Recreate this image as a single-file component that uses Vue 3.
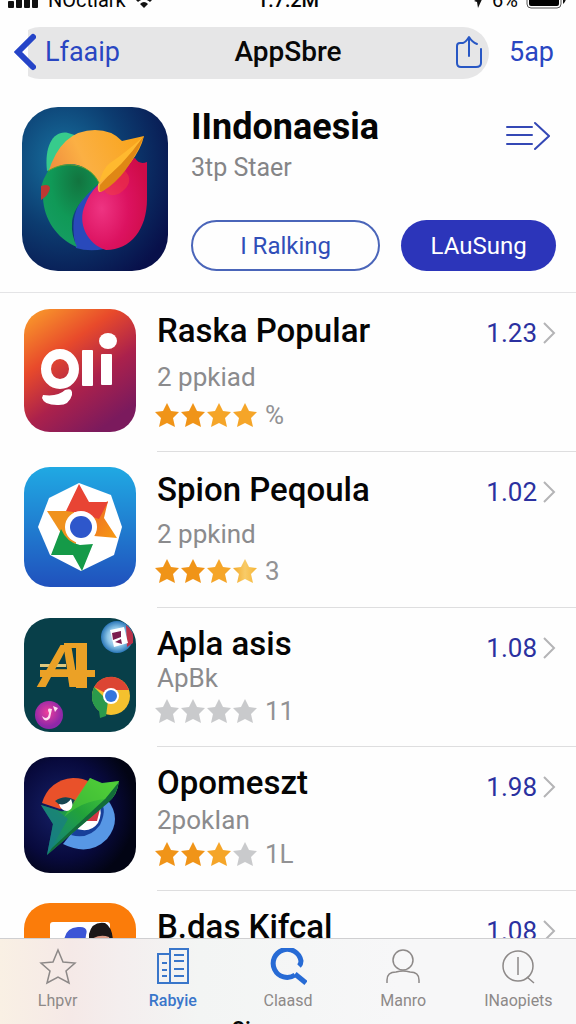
<script setup>
import { ref } from 'vue'

const apps = [
  { id: 'gii', title: 'Raska Popular', sub: '2 ppkiad', stars: 4, count: '%', score: '1.23', size: 'tall' },
  { id: 'spin', title: 'Spion Peqoula', sub: '2 ppkind', stars: 4, fade: true, count: '3', score: '1.02', size: 'mid' },
  { id: 'apla', title: 'Apla asis', sub: 'ApBk', stars: 0, count: '11', score: '1.08', size: 'short' },
  { id: 'odom', title: 'Opomeszt', sub: '2pokIan', stars: 3, count: '1L', score: '1.98', size: 'base' },
  { id: 'bdas', title: 'B.das Kifcal', sub: '2pokian', stars: 4, count: '2', score: '1.08', size: 'last' }
]

const tabs = [
  { id: 'star', label: 'Lhpvr' },
  { id: 'list', label: 'Rabyie' },
  { id: 'search', label: 'Claasd' },
  { id: 'user', label: 'Manro' },
  { id: 'inspect', label: 'INaopiets' }
]

const active = ref('list')

const starFill = (app, n) => {
  if (n > app.stars) return '#c9cacc'
  if (app.fade && n === 4) return 'url(#star-fade)'
  return n > 2 ? '#f5a528' : '#f09418'
}
</script>

<template>
  <div class="page">
    <div class="status">
      <div class="status-side">
        <svg width="32" height="20" viewBox="0 0 32 20" fill="#111">
          <rect x="0" y="11" width="6" height="7" rx="1" /><rect x="8" y="8" width="6" height="10" rx="1" />
          <rect x="16" y="5" width="6" height="13" rx="1" /><rect x="24" y="2" width="6" height="16" rx="1" />
        </svg>
        <span>NOctlark</span>
        <svg width="20" height="20" viewBox="0 0 20 20">
          <path d="M1 9Q10 1 19 9L16 12Q10 7 4 12Z" fill="#111" /><path d="M6 14Q10 10 14 14L10 18Z" fill="#111" />
        </svg>
      </div>
      <span class="clock">1:7:2M</span>
      <div class="status-side end">
        <svg width="10" height="20" viewBox="0 0 10 20"><path d="M10 5L4 18L3 12L0 11Z" fill="#111" /></svg>
        <span>6%</span>
        <svg width="42" height="20" viewBox="0 0 42 20">
          <rect x="1" y="2" width="34" height="16" rx="4" fill="none" stroke="#555" />
          <rect x="3" y="4" width="30" height="12" rx="2" fill="#000" /><path d="M37 7Q42 10 37 14Z" fill="#111" />
        </svg>
      </div>
    </div>

    <nav class="nav">
      <div class="nav-pill">
        <a class="back" href="#">
          <svg width="22" height="38" viewBox="0 0 22 38"><path d="M19 4L4 19L19 34" fill="none" stroke="#2544c8" stroke-width="6" stroke-linecap="round" stroke-linejoin="miter" /></svg>
          <span>Lfaaip</span>
        </a>
        <h1>AppSbre</h1>
        <button class="share" aria-label="Share">
          <svg width="26" height="34" viewBox="0 0 26 34" fill="none" stroke="#2857c4" stroke-width="2" stroke-linecap="round" stroke-linejoin="round">
            <path d="M7 8H4Q1 8 1 11V28Q1 32 5 32H20Q25 32 25 28V14M13 21V3M7 8Q10 7 13 2Q16 7 21 9" />
          </svg>
        </button>
      </div>
      <a class="nav-link" href="#">5ap</a>
    </nav>

    <header class="hero">
      <svg class="hero-icon" viewBox="0 0 146 164">
        <defs>
          <radialGradient id="sea" cx=".28" cy=".32" r=".85"><stop offset="0" stop-color="#17719f" /><stop offset=".5" stop-color="#0c3c70" /><stop offset="1" stop-color="#08104a" /></radialGradient>
          <linearGradient id="sun" x1="0" y1=".7" x2="1" y2=".4"><stop offset="0" stop-color="#ef8b3e" /><stop offset=".4" stop-color="#fbb044" /><stop offset="1" stop-color="#f9a51d" /></linearGradient>
          <radialGradient id="rose" cx=".3" cy=".55" r=".75"><stop offset="0" stop-color="#ee3482" /><stop offset=".55" stop-color="#dc1260" /><stop offset="1" stop-color="#cf0c48" /></radialGradient>
          <radialGradient id="leaf" cx=".65" cy=".2" r=".8"><stop offset="0" stop-color="#12743f" /><stop offset=".6" stop-color="#109957" /><stop offset="1" stop-color="#159d62" /></radialGradient>
        </defs>
        <rect width="146" height="164" fill="url(#sea)" />
        <path d="M25 64C22 38 32 23 46 26L56 29L38 58Z" fill="#37cb8c" />
        <path d="M77 77C54 92 47 111 54 141Q67 145 82 142L90 95Z" fill="#2949bb" />
        <path d="M113 51Q117 58 125 55V92C125 122 109 143 84 143C65 137 55 116 63 98Q67 87 76 78L100 55Z" fill="url(#rose)" />
        <path d="M102 63Q112 72 103 82Q93 92 84 86L81 82Z" fill="#f54139" opacity=".45" />
        <path d="M26 66Q39 23 73 23Q90 23 100 34L122 29Q119 42 109 55Q94 75 80 84Q75 88 76 77Q66 56 46 57Q34 58 26 66Z" fill="url(#sun)" />
        <path d="M122 29L78 78Q76 87 81 84Q106 69 122 29Z" fill="#df8715" />
        <path d="M121 30Q103 46 88 56Q81 61 77 76Q100 60 121 30Z" fill="#ffb92f" />
        <path d="M26 64C45 52 69 58 77 76C64 89 51 100 50 116Q49 127 55 140C34 131 22 112 21 91L19 80Q21 72 26 64Z" fill="url(#leaf)" />
        <path d="M26 64C45 52 69 58 77 76" fill="none" stroke="#67a22b" />
        <path d="M19 79Q27 76 28 81Q27 88 19 93Z" fill="#bd3833" />
      </svg>
      <div class="hero-body">
        <div class="hero-top">
          <div>
            <h2>IIndonaesia</h2>
            <p>3tp Staer</p>
          </div>
          <button class="menu" aria-label="Menu">
            <svg width="44" height="30" viewBox="0 0 44 30" fill="none" stroke="#3448b5" stroke-width="2" stroke-linecap="round"><path d="M1 6H26M1 14H26M1 23H26M29 2L43 15L29 28" /></svg>
          </button>
        </div>
        <div class="actions">
          <button class="btn outline">I Ralking</button>
          <button class="btn solid">LAuSung</button>
        </div>
      </div>
    </header>

    <main class="list">
      <svg class="defs" width="0" height="0">
        <linearGradient id="star-fade"><stop offset="0" stop-color="#f3a929" /><stop offset=".5" stop-color="#f8cb68" /><stop offset="1" stop-color="#f6b535" /></linearGradient>
      </svg>
      <a v-for="app in apps" :key="app.id" href="#" class="row" :class="app.size">
        <svg v-if="app.id === 'gii'" class="icon" viewBox="0 0 112 123">
          <defs><linearGradient id="dusk" x1="0" y1="0" x2=".65" y2="1"><stop offset="0" stop-color="#fba22b" /><stop offset=".38" stop-color="#e84a2b" /><stop offset=".68" stop-color="#ab214c" /><stop offset="1" stop-color="#7b1a5d" /></linearGradient></defs>
          <rect width="112" height="123" fill="url(#dusk)" />
          <ellipse cx="36" cy="60" rx="14" ry="15" fill="none" stroke="#fff" stroke-width="10" />
          <path d="M19 86Q34 88 41 81Q49 78 48 86Q45 97 33 96Q20 96 18 89Z" fill="#fff" />
          <rect x="58" y="41" width="11" height="36" rx="1" fill="#fff" />
          <rect x="77" y="45" width="11" height="31" rx="1" fill="#fff" />
          <ellipse cx="84" cy="32" rx="9" ry="8" fill="#fff" />
        </svg>
        <svg v-else-if="app.id === 'spin'" class="icon" viewBox="0 0 112 120">
          <defs>
            <linearGradient id="sky" x1="0" y1="0" x2="0" y2="1"><stop offset="0" stop-color="#20a9e3" /><stop offset="1" stop-color="#2051bd" /></linearGradient>
            <linearGradient id="amber" x1="0" y1="0" x2="1" y2="1"><stop offset="0" stop-color="#ec6728" /><stop offset="1" stop-color="#f79b12" /></linearGradient>
          </defs>
          <rect width="112" height="120" fill="url(#sky)" />
          <path d="M55 16L87 28L98 60L90 88L57 104L26 88L14 60L25 31Z" fill="#fff" />
          <path d="M66 44L84 34L80 51L93 71L70 69Z" fill="url(#amber)" />
          <path d="M23 44H50L52 77L42 74Z" fill="#f0921d" />
          <path d="M55 17L65 35H84L75 52L56 46L42 44Z" fill="#e84434" />
          <path d="M37 62L27 88H49L58 104L69 77L56 78Q43 76 37 62Z" fill="#159a48" />
          <circle cx="57" cy="60" r="16" fill="#fff" />
          <circle cx="57" cy="60" r="11" fill="#2e57cb" />
        </svg>
        <svg v-else-if="app.id === 'apla'" class="icon" viewBox="0 0 112 114">
          <defs>
            <radialGradient id="ball"><stop offset="0" stop-color="#f4f8fc" /><stop offset=".6" stop-color="#8ac4e7" /><stop offset="1" stop-color="#2b77b8" /></radialGradient>
            <radialGradient id="plum" cx=".45" cy=".4"><stop offset="0" stop-color="#ef3e9b" /><stop offset="1" stop-color="#8f28a9" /></radialGradient>
          </defs>
          <rect width="112" height="114" fill="#083f49" />
          <circle cx="93" cy="19" r="16" fill="url(#ball)" />
          <path d="M102 7Q111 13 109 25L103 29Z" fill="#ba3148" />
          <path d="M86 12L100 9L104 25L90 29Z" fill="#fff" /><path d="M88 15L97 13V19L89 22ZM91 24L97 21L98 26Z" fill="#7b1e4f" />
          <g fill="#eba126">
            <rect x="16" y="46" width="26" height="3" fill="#dfc87d" />
            <text x="14" y="69" class="logo-text">A</text>
            <rect x="52" y="25" width="11" height="45" /><rect x="16" y="52" width="55" height="7" />
            <rect x="40" y="25" width="22" height="5" />
          </g>
          <circle cx="87" cy="78" r="19" fill="#f4c12e" />
          <path d="M87 78L70 69A19 19 0 0 1 105 72L88 72Z" fill="#dc4533" />
          <path d="M70 69L84 83L82 98L76 100L75 93Q64 84 70 69Z" fill="#2b9a4b" />
          <circle cx="87" cy="78" r="8" fill="#fff" /><circle cx="87" cy="78" r="6" fill="#3476dd" />
          <circle cx="25" cy="97" r="14" fill="url(#plum)" />
          <path d="M18 98Q24 103 25 95Q22 89 28 91L26 100Q21 106 18 98ZM29 88L34 90L31 94Z" fill="#ffe0ef" />
        </svg>
        <svg v-else-if="app.id === 'odom'" class="icon" viewBox="0 0 112 116">
          <defs>
            <radialGradient id="night" cx=".35" cy=".45" r=".65"><stop offset="0" stop-color="#162169" /><stop offset=".65" stop-color="#080a3d" /><stop offset="1" stop-color="#020414" /></radialGradient>
            <linearGradient id="dart" x1=".1" y1=".8" x2=".8" y2="0"><stop offset="0" stop-color="#158577" /><stop offset=".5" stop-color="#22a23a" /><stop offset="1" stop-color="#48ca3c" /></linearGradient>
          </defs>
          <rect width="112" height="116" fill="url(#night)" />
          <path d="M39 87Q65 100 83 82Q99 62 83 42L63 57Z" fill="#5797e5" />
          <path d="M47 78Q65 83 76 68Q85 48 73 45L56 66Z" fill="#173f99" />
          <path d="M53 72Q67 76 74 66Q79 55 75 49L62 59Z" fill="#fff" /><path d="M60 64H73L76 52L71 49Z" fill="#d43643" />
          <path d="M18 46Q25 23 49 21Q60 21 65 25L54 44L36 52Z" fill="#e9512a" />
          <path d="M31 44Q41 37 51 43L45 56Z" fill="#154551" />
          <path d="M17 48L36 54Q44 56 50 46L66 21L78 26L95 24Q93 39 85 44L23 98L29 67Z" fill="url(#dart)" />
          <path d="M17 48L33 53L44 62L23 98L29 67Z" fill="#187b87" opacity=".65" />
          <path d="M95 25Q92 39 85 45L23 98L28 91L81 42Z" fill="#126c3a" />
          <path d="M66 21L49 46L40 60Q58 44 81 42L95 24L78 27Z" fill="#56cf35" opacity=".55" />
          <path d="M35 47Q42 49 47 42Q51 52 43 54Q37 54 35 47Z" fill="#fff" />
        </svg>
        <svg v-else class="icon" viewBox="0 0 112 116">
          <rect width="112" height="116" fill="#fb7c0a" />
          <rect x="26" y="19" width="60" height="80" rx="3" fill="#fff" />
          <path d="M40 40Q40 25 54 24Q65 23 62 32L60 50H40Z" fill="#3b55d6" />
          <path d="M67 30H88V50H65Z" fill="#dc9c88" /><path d="M65 31Q68 18 81 20Q90 25 89 45L85 34Q75 30 65 38Z" fill="#1b1718" />
        </svg>
        <div class="info">
          <h3>{{ app.title }}</h3>
          <p class="sub">{{ app.sub }}</p>
          <div class="rating">
            <svg v-for="n in 4" :key="n" width="26" height="26" viewBox="0 0 26 26">
              <path d="M13 1L17 9L25 10L19 16L21 25L13 21L5 25L7 16L1 10L9 9Z" :fill="starFill(app, n)" />
            </svg>
            <span>{{ app.count }}</span>
          </div>
        </div>
        <div class="score">
          <span>{{ app.score }}</span>
          <svg width="14" height="24" viewBox="0 0 14 24"><path d="M2 2L12 12L2 22" fill="none" stroke="#b4b4b6" stroke-width="2" /></svg>
        </div>
      </a>
    </main>

    <footer class="tabbar">
      <div class="tabs">
        <button v-for="tab in tabs" :key="tab.id" class="tab" :class="[tab.id, { active: active === tab.id }]" @click="active = tab.id">
          <svg width="38" height="38" viewBox="0 0 38 38" fill="none" stroke="currentColor" stroke-width="1.5">
            <path v-if="tab.id === 'star'" d="M19 2L24 14L36 15L27 23L30 35L19 29L8 35L11 23L2 15L14 14Z" />
            <g v-else-if="tab.id === 'list'" stroke-width="2">
              <path d="M16 6H4V35H34V1H16V35M20 7H30M20 13H30M20 21H30M20 28H30M8 15H13M8 22H13M8 28H13" />
            </g>
            <g v-else-if="tab.id === 'search'" stroke="#276bd5" stroke-width="5">
              <path d="M26 27A14 14 0 1 1 32 13Q32 16 30 18" /><path d="M26 26L37 35" />
            </g>
            <g v-else-if="tab.id === 'user'">
              <circle cx="19" cy="12" r="10" /><path d="M3 35V32Q3 24 12 24Q19 22 26 24Q35 24 35 32V35" />
            </g>
            <g v-else><circle cx="19" cy="18" r="15" /><path d="M19 9V27M28 29L35 35" /></g>
          </svg>
          <span>{{ tab.label }}</span>
        </button>
      </div>
      <div class="peek">Oi</div>
    </footer>
  </div>
</template>

<style>
body {
  background: #fefefe;
}
</style>

<style scoped>
* {
  box-sizing: border-box;
}

.page {
  display: flex;
  flex-direction: column;
  height: 100vh;
  overflow: hidden;
  background: #fefefe;
  font-family: Roboto, 'Liberation Sans', sans-serif;
  color: #050505;
}

h1, h2, h3, p {
  margin: 0;
  font-weight: 500;
}

a {
  color: inherit;
  text-decoration: none;
}

button {
  padding: 0;
  border: 0;
  background: none;
  font: inherit;
  cursor: pointer;
}

svg {
  display: block;
  flex: none;
}

/* Status bar, scrolled partly off the top */
.status {
  display: grid;
  grid-template-columns: 1fr auto 1fr;
  align-items: center;
  height: 24px;
  margin: -12px 8px 15px;
  font-size: 20px;
  line-height: 24px;
  flex: none;
}

.status-side {
  display: flex;
  align-items: center;
  gap: 8px;
}

.status-side.end {
  justify-content: flex-end;
}

.clock {
  font-weight: 500;
}

/* Navigation */
.nav {
  display: flex;
  align-items: center;
  flex: none;
  padding: 0 22px 0 14px;
  gap: 20px;
  color: #2946c2;
  font-size: 27px;
  line-height: 32px;
}

.nav-pill {
  flex: 1;
  display: flex;
  align-items: center;
  height: 52px;
  padding-bottom: 2px;
  border-radius: 26px;
  background: linear-gradient(90deg, transparent 14px, #e6e6e7 14px);
}

.back {
  display: flex;
  align-items: center;
  gap: 9px;
}

.nav h1 {
  flex: 1;
  color: #080808;
  font-size: 28px;
  text-align: center;
}

.share {
  margin-right: 7px;
}

.nav-link {
  padding-bottom: 2px;
}

/* Featured app */
.hero {
  display: flex;
  gap: 23px;
  flex: none;
  padding: 28px 20px 21px 22px;
  border-bottom: 1px solid #e4e4e6;
}

.hero-icon {
  width: 146px;
  height: 164px;
  border-radius: 36px;
}

.hero-body {
  flex: 1;
  display: flex;
  flex-direction: column;
  justify-content: space-between;
}

.hero-top {
  display: flex;
  justify-content: space-between;
  align-items: flex-start;
}

.hero h2 {
  font-size: 36px;
  font-weight: 700;
  line-height: 40px;
}

.hero p {
  margin-top: 5px;
  color: #858587;
  font-size: 25px;
  font-weight: 400;
  line-height: 32px;
}

.menu {
  margin: 14px 6px 0 0;
}

.actions {
  display: grid;
  grid-template-columns: 11fr 9fr;
  gap: 21px;
}

.btn {
  height: 51px;
  border-radius: 26px;
  font-size: 24px;
}

.outline {
  border: 2px solid #4a65b9;
  color: #304eb8;
}

.solid {
  background: #2c35ba;
  color: #fff;
}

/* Ranking list */
.list {
  flex: 1;
  min-height: 0;
  overflow: hidden;
}

.defs {
  position: absolute;
}

.row {
  --sub-gap: 13px;
  --rate-gap: 12px;
  display: flex;
  gap: 21px;
  padding-left: 24px;
}

.icon {
  width: 112px;
  height: 116px;
  margin-top: 10px;
  border-radius: 26px;
}

.info {
  flex: 1;
  min-width: 0;
  padding-top: 16px;
}

.info,
.score {
  border-bottom: 1px solid #dededf;
}

.score {
  margin-left: -21px;
}

.row.tall {
  height: 159px;
}

.tall .info,
.mid .info {
  padding-top: 18px;
}

.tall .icon {
  height: 123px;
  margin-top: 16px;
}

.row.mid {
  --sub-gap: 11px;
  --rate-gap: 11px;
  height: 156px;
}

.mid .icon {
  height: 120px;
  margin-top: 15px;
}

.row.short {
  --sub-gap: 1px;
  --rate-gap: 7px;
  height: 139px;
}

.short .icon {
  height: 114px;
}

.row.base {
  --sub-gap: 4px;
  --rate-gap: 8px;
  height: 144px;
}

.last .icon {
  margin-top: 12px;
}

.logo-text {
  font-family: 'Liberation Sans', sans-serif;
  font-size: 62px;
  font-weight: 700;
  font-style: italic;
}

.info h3 {
  font-size: 33px;
  font-weight: 500;
  line-height: 40px;
  white-space: nowrap;
}

.sub {
  margin-top: var(--sub-gap);
  color: #8b8b8d;
  font-size: 26px;
  font-weight: 400;
  line-height: 26px;
}

.rating {
  display: flex;
  align-items: center;
  height: 26px;
  margin: var(--rate-gap) 0 0 -3px;
  color: #929294;
  font-size: 26px;
}

.rating span {
  margin-left: 7px;
}

.score {
  display: flex;
  align-items: flex-start;
  gap: 5px;
  padding: 25px 20px 0 0;
  color: #2b31a0;
  font-size: 26px;
  line-height: 30px;
}

.score svg {
  margin-top: 3px;
}

/* Tab bar */
.tabbar {
  flex: none;
  height: 86px;
  overflow: hidden;
  border-top: 1px solid #cfcfd1;
  background: linear-gradient(90deg, #f9f0e4 0, #f5e9e7 70px, #f4eeee 120px, #f3f5f4 200px, #f7f7f8 400px);
}

.tabs {
  display: grid;
  grid-template-columns: repeat(5, 1fr);
  height: 80px;
}

.tab {
  display: flex;
  flex-direction: column;
  align-items: center;
  gap: 5px;
  padding-top: 9px;
  color: #8d8988;
  font-size: 16px;
  line-height: 20px;
}

.tab.active {
  color: #3976ca;
  font-weight: 500;
}

.peek {
  padding-right: 94px;
  text-align: center;
  font-size: 20px;
  font-weight: 700;
  line-height: 20px;
}
</style>
